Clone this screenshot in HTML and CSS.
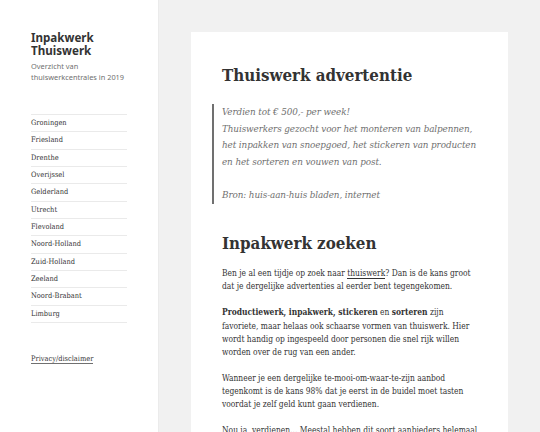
FILE: index.html
```html
<!DOCTYPE html>
<html lang="nl">
<head>
<meta charset="utf-8">
<title>Inpakwerk Thuiswerk</title>
<link rel="stylesheet" href="styles.css">
</head>
<body>
<div class="page">
  <aside class="sidebar">
    <div class="branding">
      <p class="site-title">Inpakwerk Thuiswerk</p>
      <p class="site-desc">Overzicht van thuiswerkcentrales in 2019</p>
    </div>
    <ul class="menu">
      <li>Groningen</li>
      <li>Friesland</li>
      <li>Drenthe</li>
      <li>Overijssel</li>
      <li>Gelderland</li>
      <li>Utrecht</li>
      <li>Flevoland</li>
      <li>Noord-Holland</li>
      <li>Zuid-Holland</li>
      <li>Zeeland</li>
      <li>Noord-Brabant</li>
      <li>Limburg</li>
    </ul>
    <p class="widget"><a href="#">Privacy/disclaimer</a></p>
  </aside>
  <main class="main">
    <article class="card">
      <h1 class="entry-title">Thuiswerk advertentie</h1>
      <blockquote class="quote">
        <p>Verdien tot € 500,- per week!<br>Thuiswerkers gezocht voor het monteren van balpennen, het inpakken van snoepgoed, het stickeren van producten en het sorteren en vouwen van post.</p>
        <p>Bron: huis-aan-huis bladen, internet</p>
      </blockquote>
      <h2 class="section-title">Inpakwerk zoeken</h2>
      <p>Ben je al een tijdje op zoek naar <a href="#">thuiswerk</a>? Dan is de kans groot dat je dergelijke advertenties al eerder bent tegengekomen.</p>
      <p><strong>Productiewerk, inpakwerk, stickeren</strong> en <strong>sorteren</strong> zijn favoriete, maar helaas ook schaarse vormen van thuiswerk. Hier wordt handig op ingespeeld door personen die snel rijk willen worden over de rug van een ander.</p>
      <p>Wanneer je een dergelijke te-mooi-om-waar-te-zijn aanbod tegenkomt is de kans 98% dat je eerst in de buidel moet tasten voordat je zelf geld kunt gaan verdienen.</p>
      <p class="long"><span class="nowrap">Nou ja, verdienen... Meestal hebben dit soort aanbieders helemaal</span> geen werk voor je.</p>
    </article>
  </main>
</div>
</body>
</html>
```
FILE: styles.css
```css
html, body {
  margin: 0;
  padding: 0;
  height: 100%;
  overflow: hidden;
}
body {
  background: #f1f1f1;
  color: #333333;
  font-family: "DejaVu Serif Condensed", "DejaVu Serif", serif;
}
.page {
  display: flex;
  height: 100%;
}
.sidebar {
  width: 158px;
  flex: 0 0 158px;
  background: #ffffff;
  box-shadow: 0 0 1px rgba(0, 0, 0, 0.15);
  padding: 31.3px 31px 0 31px;
  box-sizing: border-box;
}
.branding {
  margin-bottom: 31.4px;
}
.site-title {
  margin: 0;
  font-family: "Noto Sans", sans-serif;
  font-weight: 700;
  font-size: 11.6px;
  line-height: 13px;
  color: #333333;
}
.site-desc {
  margin: 3.3px 0 0 0;
  font-family: "Noto Sans", sans-serif;
  font-size: 7.4px;
  line-height: 11px;
  color: #707070;
}
.menu {
  list-style: none;
  margin: 0;
  padding: 0;
  width: 96px;
  border-top: 1px solid #eaeaea;
}
.menu li {
  font-size: 7.4px;
  line-height: 16.33px;
  border-bottom: 1px solid #eaeaea;
  color: #333333;
}
.widget {
  margin: 30px 0 0 0;
  font-size: 7.4px;
  line-height: 12px;
}
.widget a {
  color: #333333;
  text-decoration: none;
  border-bottom: 1px solid #707070;
}
.main {
  flex: 1;
  padding-top: 32px;
  overflow: hidden;
}
.card {
  margin-left: 33px;
  width: 317px;
  min-height: 420px;
  background: #ffffff;
  padding: 33.4px 31px 0 31px;
  box-sizing: border-box;
  font-size: 8.4px;
  line-height: 13.1px;
}
.entry-title {
  margin: 0 0 18.6px 0;
  font-size: 16.8px;
  line-height: 20px;
  font-weight: 700;
}
.quote {
  margin: 0 -8px 29px -10px;
  padding-left: 8px;
  border-left: 2px solid #707070;
  color: #707070;
  font-style: italic;
  font-size: 9.8px;
  letter-spacing: -0.1px;
  line-height: 16.7px;
}
.section-title {
  margin: 0 0 14px 0;
  font-size: 16.8px;
  line-height: 20px;
  font-weight: 700;
}
.card p {
  margin: 0 0 13.1px 0;
}
.card .quote p {
  margin: 0 0 16.7px 0;
}
.card .quote p:last-child {
  margin-bottom: 0;
}
.card a {
  color: #333333;
  text-decoration: none;
  border-bottom: 1px solid #333333;
}
.nowrap {
  white-space: nowrap;
}
```
